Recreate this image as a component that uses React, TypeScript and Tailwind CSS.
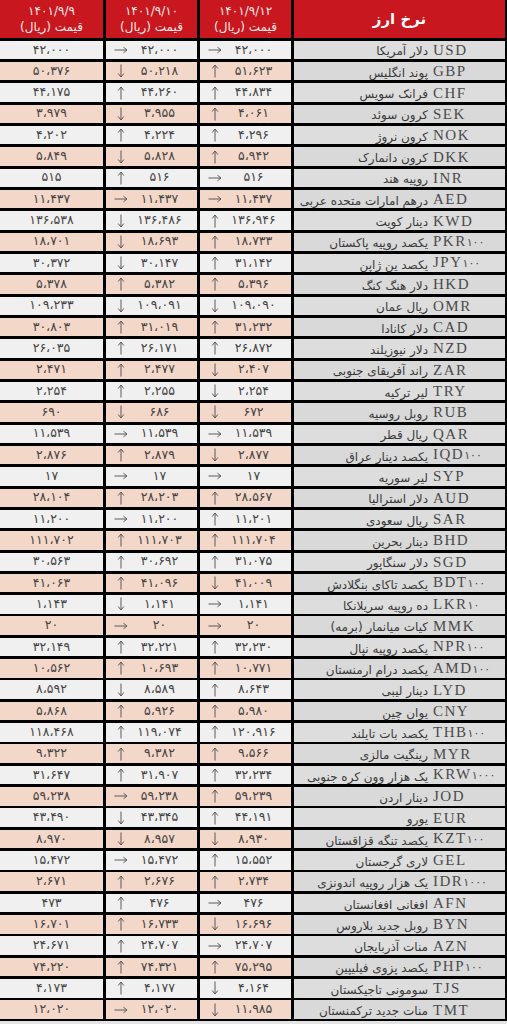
import React from "react";

type Row = [string, string, string, string, string, string, string, string];

const rows: Row[] = [
  ["USD", "", "دلار آمریکا", "r", "۴۲،۰۰۰", "r", "۴۲،۰۰۰", "۴۲،۰۰۰"],
  ["GBP", "", "پوند انگلیس", "u", "۵۱،۶۲۳", "d", "۵۰،۲۱۸", "۵۰،۳۷۶"],
  ["CHF", "", "فرانک سویس", "u", "۴۴،۸۳۴", "u", "۴۴،۲۶۰", "۴۴،۱۷۵"],
  ["SEK", "", "کرون سوئد", "u", "۴،۰۶۱", "d", "۳،۹۵۵", "۳،۹۷۹"],
  ["NOK", "", "کرون نروژ", "u", "۴،۲۹۶", "u", "۴،۲۲۴", "۴،۲۰۲"],
  ["DKK", "", "کرون دانمارک", "u", "۵،۹۴۲", "d", "۵،۸۲۸", "۵،۸۴۹"],
  ["INR", "", "روپیه هند", "r", "۵۱۶", "u", "۵۱۶", "۵۱۵"],
  ["AED", "", "درهم امارات متحده عربی", "r", "۱۱،۴۳۷", "r", "۱۱،۴۳۷", "۱۱،۴۳۷"],
  ["KWD", "", "دینار کویت", "u", "۱۳۶،۹۴۶", "d", "۱۳۶،۴۸۶", "۱۳۶،۵۳۸"],
  ["PKR", "۱۰۰", "یکصد روپیه پاکستان", "u", "۱۸،۷۳۳", "d", "۱۸،۶۹۳", "۱۸،۷۰۱"],
  ["JPY", "۱۰۰", "یکصد ین ژاپن", "u", "۳۱،۱۴۲", "d", "۳۰،۱۴۷", "۳۰،۳۷۲"],
  ["HKD", "", "دلار هنگ کنگ", "u", "۵،۳۹۶", "u", "۵،۳۸۲", "۵،۳۷۸"],
  ["OMR", "", "ریال عمان", "d", "۱۰۹،۰۹۰", "d", "۱۰۹،۰۹۱", "۱۰۹،۲۳۳"],
  ["CAD", "", "دلار کانادا", "u", "۳۱،۲۳۲", "u", "۳۱،۰۱۹", "۳۰،۸۰۳"],
  ["NZD", "", "دلار نیوزیلند", "u", "۲۶،۸۷۲", "u", "۲۶،۱۷۱", "۲۶،۰۳۵"],
  ["ZAR", "", "راند آفریقای جنوبی", "d", "۲،۴۰۷", "u", "۲،۴۷۷", "۲،۴۷۱"],
  ["TRY", "", "لیر ترکیه", "d", "۲،۲۵۴", "u", "۲،۲۵۵", "۲،۲۵۴"],
  ["RUB", "", "روبل روسیه", "d", "۶۷۲", "d", "۶۸۶", "۶۹۰"],
  ["QAR", "", "ریال قطر", "r", "۱۱،۵۳۹", "r", "۱۱،۵۳۹", "۱۱،۵۳۹"],
  ["IQD", "۱۰۰", "یکصد دینار عراق", "d", "۲،۸۷۷", "u", "۲،۸۷۹", "۲،۸۷۶"],
  ["SYP", "", "لیر سوریه", "r", "۱۷", "r", "۱۷", "۱۷"],
  ["AUD", "", "دلار استرالیا", "u", "۲۸،۵۶۷", "u", "۲۸،۲۰۳", "۲۸،۱۰۴"],
  ["SAR", "", "ریال سعودی", "u", "۱۱،۲۰۱", "r", "۱۱،۲۰۰", "۱۱،۲۰۰"],
  ["BHD", "", "دینار بحرین", "u", "۱۱۱،۷۰۴", "u", "۱۱۱،۷۰۳", "۱۱۱،۷۰۲"],
  ["SGD", "", "دلار سنگاپور", "u", "۳۱،۰۷۵", "u", "۳۰،۶۹۲", "۳۰،۵۶۳"],
  ["BDT", "۱۰۰", "یکصد تاکای بنگلادش", "d", "۴۱،۰۰۹", "u", "۴۱،۰۹۶", "۴۱،۰۶۳"],
  ["LKR", "۱۰", "ده روپیه سریلانکا", "r", "۱،۱۴۱", "d", "۱،۱۴۱", "۱،۱۴۳"],
  ["MMK", "", "کیات میانمار (برمه)", "r", "۲۰", "r", "۲۰", "۲۰"],
  ["NPR", "۱۰۰", "یکصد روپیه نپال", "u", "۳۲،۲۳۰", "u", "۳۲،۲۲۱", "۳۲،۱۴۹"],
  ["AMD", "۱۰۰", "یکصد درام ارمنستان", "u", "۱۰،۷۷۱", "u", "۱۰،۶۹۳", "۱۰،۵۶۲"],
  ["LYD", "", "دینار لیبی", "u", "۸،۶۴۳", "d", "۸،۵۸۹", "۸،۵۹۲"],
  ["CNY", "", "یوان چین", "u", "۵،۹۸۰", "u", "۵،۹۲۶", "۵،۸۶۸"],
  ["THB", "۱۰۰", "یکصد بات تایلند", "u", "۱۲۰،۹۱۶", "u", "۱۱۹،۰۷۴", "۱۱۸،۴۶۸"],
  ["MYR", "", "رینگیت مالزی", "u", "۹،۵۶۶", "u", "۹،۳۸۲", "۹،۳۲۲"],
  ["KRW", "۱۰۰۰", "یک هزار وون کره جنوبی", "u", "۳۲،۲۳۴", "u", "۳۱،۹۰۷", "۳۱،۶۴۷"],
  ["JOD", "", "دینار اردن", "u", "۵۹،۲۳۹", "r", "۵۹،۲۳۸", "۵۹،۲۳۸"],
  ["EUR", "", "یورو", "u", "۴۴،۱۹۱", "d", "۴۳،۳۴۵", "۴۳،۴۹۰"],
  ["KZT", "۱۰۰", "یکصد تنگه قزاقستان", "d", "۸،۹۳۰", "d", "۸،۹۵۷", "۸،۹۷۰"],
  ["GEL", "", "لاری گرجستان", "u", "۱۵،۵۵۲", "r", "۱۵،۴۷۲", "۱۵،۴۷۲"],
  ["IDR", "۱۰۰۰", "یک هزار روپیه اندونزی", "u", "۲،۷۳۴", "u", "۲،۶۷۶", "۲،۶۷۱"],
  ["AFN", "", "افغانی افغانستان", "r", "۴۷۶", "u", "۴۷۶", "۴۷۳"],
  ["BYN", "", "روبل جدید بلاروس", "d", "۱۶،۶۹۶", "u", "۱۶،۷۳۳", "۱۶،۷۰۱"],
  ["AZN", "", "منات آذربایجان", "r", "۲۴،۷۰۷", "u", "۲۴،۷۰۷", "۲۴،۶۷۱"],
  ["PHP", "۱۰۰", "یکصد پزوی فیلیپین", "u", "۷۵،۲۹۵", "u", "۷۴،۳۲۱", "۷۴،۲۲۰"],
  ["TJS", "", "سومونی تاجیکستان", "d", "۴،۱۶۴", "u", "۴،۱۷۷", "۴،۱۷۳"],
  ["TMT", "", "منات جدید ترکمنستان", "d", "۱۱،۹۸۵", "r", "۱۲،۰۲۰", "۱۲،۰۲۰"],
];

function Arrow({ dir }: { dir: string }) {
  if (dir === "r") {
    return (
      <svg width="14" height="8" viewBox="0 0 14 8" fill="none" stroke="#5a5a5a" strokeWidth="1">
        <path d="M0.5 4H13" />
        <path d="M9.5 1.2L13 4L9.5 6.8" />
      </svg>
    );
  }
  if (dir === "u") {
    return (
      <svg width="8" height="14" viewBox="0 0 8 14" fill="none" stroke="#5a5a5a" strokeWidth="1">
        <path d="M4 13.5V1" />
        <path d="M1.2 4.5L4 1L6.8 4.5" />
      </svg>
    );
  }
  return (
    <svg width="8" height="14" viewBox="0 0 8 14" fill="none" stroke="#5a5a5a" strokeWidth="1">
      <path d="M4 0.5V13" />
      <path d="M1.2 9.5L4 13L6.8 9.5" />
    </svg>
  );
}

const fa = "font-['DejaVu_Sans',sans-serif]";

export default function App() {
  return (
    <div className="w-[507px] h-[1024px] bg-[#e4e4e4] overflow-hidden">
      <div className="bg-black pr-[2px] pb-[2px]">
        <div className="grid grid-cols-[103px_91px_91px_1fr] gap-x-[3px] gap-y-[2.83px]">
          {["۱۴۰۱/۹/۹", "۱۴۰۱/۹/۱۰", "۱۴۰۱/۹/۱۲"].map((d) => (
            <div
              key={d}
              className={`h-[37.8px] bg-[#c8171e] flex flex-col items-center justify-center text-[#fbeaea] text-[12px] leading-[16px] ${fa}`}
            >
              <span dir="ltr">{d}</span>
              <span dir="rtl">قیمت (ریال)</span>
            </div>
          ))}
          <div
            className={`h-[37.8px] bg-[#c8171e] flex items-center justify-center text-white text-[15px] font-bold ${fa}`}
            dir="rtl"
          >
            نرخ ارز
          </div>

          {rows.map((r, i) => {
            const even = i % 2 === 0;
            const cellBg = even ? "bg-[#f0f0f0]" : "bg-[#f3d7c8]";
            const nameBg = even ? "bg-[#dddddd]" : "bg-[#d9d9d9]";
            return (
              <React.Fragment key={r[0]}>
                <div
                  className={`h-[18.5px] ${cellBg} flex items-center justify-center text-[12.5px] text-[#444] ${fa}`}
                >
                  <span dir="ltr">{r[7]}</span>
                </div>
                <div className={`h-[18.5px] ${cellBg} flex items-center text-[12.5px] text-[#444] ${fa}`}>
                  <div className="w-[30px] flex items-center justify-center">
                    <Arrow dir={r[5]} />
                  </div>
                  <div className="flex-1 text-center pr-[14px]" dir="ltr">
                    {r[6]}
                  </div>
                </div>
                <div className={`h-[18.5px] ${cellBg} flex items-center text-[12.5px] text-[#444] ${fa}`}>
                  <div className="w-[30px] flex items-center justify-center">
                    <Arrow dir={r[3]} />
                  </div>
                  <div className="flex-1 text-center pr-[14px]" dir="ltr">
                    {r[4]}
                  </div>
                </div>
                <div className={`h-[18.5px] ${nameBg} flex items-center text-[#3a3a3a]`}>
                  <div
                    className={`flex-1 text-right pr-[5px] text-[12px] leading-[18px] pt-[3px] whitespace-nowrap ${fa}`}
                    dir="rtl"
                  >
                    {r[2]}
                  </div>
                  <div
                    className="w-[72px] flex items-baseline whitespace-nowrap text-[#4a4a4a]"
                    dir="ltr"
                  >
                    <span className="font-['Liberation_Serif',serif] text-[15px] tracking-[1.5px] leading-[18px]">
                      {r[0]}
                    </span>
                    {r[1] && (
                      <span className={`text-[11px] ${fa}`}>{r[1]}</span>
                    )}
                  </div>
                </div>
              </React.Fragment>
            );
          })}
        </div>
      </div>
    </div>
  );
}
